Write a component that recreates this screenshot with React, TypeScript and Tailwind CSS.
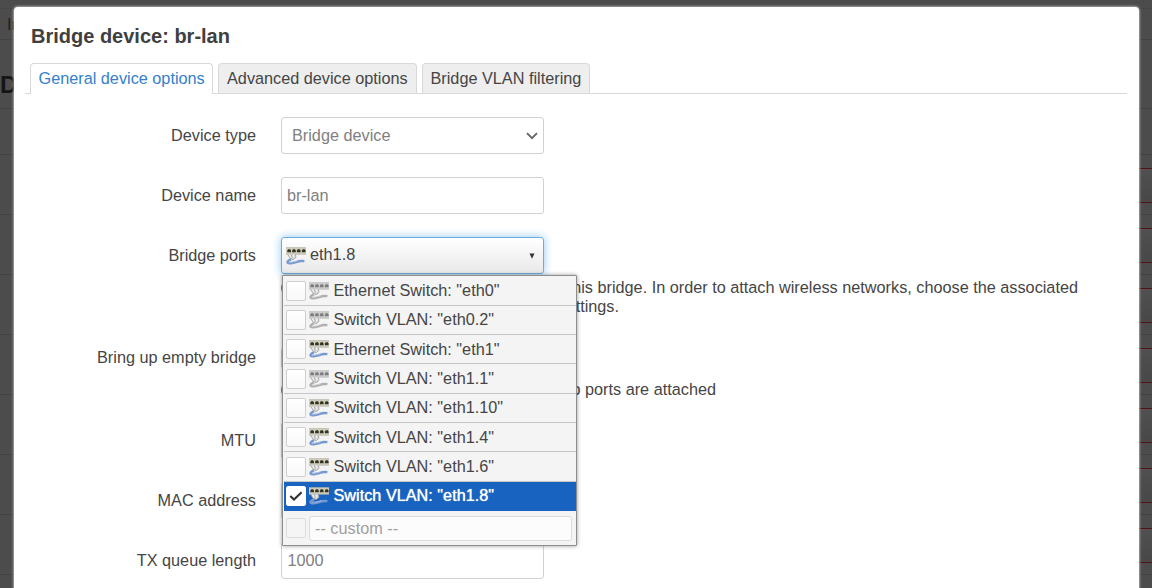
import React from "react";

type PortIconProps = { disabled?: boolean; className?: string };

function PortIcon({ disabled = false, className = "" }: PortIconProps) {
  const panel = disabled ? "#cdcdcd" : "#d0cfc0";
  const edge = disabled ? "#b8b8b8" : "#adac9e";
  const hole = disabled ? "#7d7d7d" : "#35351f";
  const cable = disabled ? "#b0b0b0" : "#7799d0";
  const cableLight = disabled ? "#d3d3d3" : "#a9c2e6";
  return (
    <svg viewBox="0 0 20 20" className={`h-5 w-5 shrink-0 ${className}`} aria-hidden="true">
      <path d="M0 1.4H20V8.4H0Z" fill={panel} />
      <path d="M0 1.7H20M0 8.2H20" stroke={edge} strokeWidth="0.6" />
      <path
        d="M1.3 6.2V4.4l.9-1.2h1.9l.9 1.2v1.8zM6.1 6.2V4.4l.9-1.2h1.9l.9 1.2v1.8zM10.9 6.2V4.4l.9-1.2h1.9l.9 1.2v1.8zM15.9 6.2V4.4l.9-1.2h1.9l.9 1.2v1.8z"
        fill={hole}
      />
      <path d="M1.6 8.2L4.2 12.4L7.2 13.6L9.8 11.6L9.4 8.2Z" fill="#d8d8d4" />
      <path
        d="M1.8 8.6L4.4 12.6L7.2 13.6L9.9 11.4L9.5 8.6M5.4 8.6L6.2 11.6"
        fill="none"
        stroke="#a2a2a2"
        strokeWidth="0.9"
      />
      <path d="M3.6 8.8L5 11.2M7.4 8.8L8 11.4" fill="none" stroke="#f8f8f8" strokeWidth="1.1" />
      <path
        d="M5 13.2C3.5 14 1 15.2 1.5 16.6C2.2 17.8 6.5 17.6 10.2 16.2C12.8 15 15.5 14.8 18.4 15.2"
        fill="none"
        stroke={cable}
        strokeWidth="2.3"
      />
      <path d="M3 16C6.4 16.6 9.6 15.4 12.4 14.4" fill="none" stroke={cableLight} strokeWidth="0.9" />
    </svg>
  );
}

const ports = [
  { label: 'Ethernet Switch: "eth0"', disabled: true },
  { label: 'Switch VLAN: "eth0.2"', disabled: true },
  { label: 'Ethernet Switch: "eth1"' },
  { label: 'Switch VLAN: "eth1.1"', disabled: true },
  { label: 'Switch VLAN: "eth1.10"' },
  { label: 'Switch VLAN: "eth1.4"' },
  { label: 'Switch VLAN: "eth1.6"' },
  { label: 'Switch VLAN: "eth1.8"', selected: true },
];

function Check({ checked = false, faded = false }: { checked?: boolean; faded?: boolean }) {
  return (
    <span
      className={`flex h-5 w-5 shrink-0 items-center justify-center rounded-[2px] border ${
        checked
          ? "border-white bg-white"
          : faded
            ? "border-[#dddddd] bg-[#f5f5f5]"
            : "border-[#cfcfcf] bg-linear-to-b from-white to-[#f8f8f8]"
      }`}
    >
      {checked && (
        <svg viewBox="0 0 14 12" className="h-3 w-3.5">
          <path d="M1.3 6.1L5 9.6L12.6 2.2" fill="none" stroke="#333333" strokeWidth="2.1" />
        </svg>
      )}
    </span>
  );
}

function PortMenu() {
  return (
    <div className="absolute top-[38px] left-px z-10 h-[271px] w-[295px] rounded-[1px] border border-[#8d8d8d] bg-[#f4f4f4] pl-px shadow-[0_0_4px_rgba(0,0,0,0.4)]">
      <ul className="pt-[0.4px]">
        {ports.map((port) => (
          <li
            key={port.label}
            className={`flex h-[29.35px] items-center border-b pl-[2px] ${
              port.selected
                ? "border-[#1763bf] bg-[#1763bf] text-white [text-shadow:0_0_1px_#ffffff]"
                : "border-[#c6c6c6]"
            }`}
          >
            <Check checked={port.selected} />
            <PortIcon disabled={port.disabled} className="ml-[3px]" />
            <span className="-mt-px ml-[4.5px] leading-[22px] whitespace-nowrap">{port.label}</span>
          </li>
        ))}
        <li className="flex h-[34px] items-center pl-[2px]">
          <Check faded />
          <span className="ml-[3px] flex h-[25px] w-[263px] items-center rounded-[3px] border border-[#dcdcdc] bg-[#fcfcfc] pl-[5px] text-[#a0a0a0]">
            -- custom --
          </span>
        </li>
      </ul>
    </div>
  );
}

function Row({ label, className, children }: { label: string; className: string; children?: React.ReactNode }) {
  return (
    <div className={`flex ${className}`}>
      <div className="w-[242px] shrink-0 pt-2 text-right leading-5">{label}</div>
      <div className="ml-[25px] min-w-0 flex-1">{children}</div>
    </div>
  );
}

function Help({ className, children }: { className: string; children: React.ReactNode }) {
  return (
    <div className={`flex justify-between leading-[19px] ${className}`}>
      <span className="mt-[2px] h-4 w-4 shrink-0 rounded-full bg-[#3b88ca]" />
      <div className="whitespace-nowrap">{children}</div>
    </div>
  );
}

const field = "flex h-[37px] w-[263px] items-center rounded-[3px] border border-[#d2d2d2] bg-white text-[#808080]";
const tab = "rounded-t-[4px] border border-[#d9d9d9] border-b-0 px-2 leading-[29px] whitespace-nowrap";
const stripes = [154, 214, 274, 334, 394, 454, 514, 574];

function Backdrop() {
  return (
    <div className="absolute inset-0 overflow-hidden bg-[#4c4c4c]" aria-hidden="true">
      <div className="h-[9px] border-b border-[#464646]" />
      <div className="h-[31px] border-b border-[#434343] pl-[7px] text-[16px] leading-[32px] text-[#202020]">In</div>
      <div className="h-[69px] border-b border-[#414141] pt-[28px] text-[24px] leading-[34px] font-bold text-[#151515]">
        D
      </div>
      <div className="h-[45px]" />
      {stripes.map((stripe) => (
        <div key={stripe} className="h-[60px] border-t border-[#424242]">
          <div className="mt-[13px] ml-auto h-[35px] w-20 border-y border-[#531417] bg-linear-to-b from-[#515050] to-[#494848]" />
        </div>
      ))}
    </div>
  );
}

export default function App() {
  return (
    <main className="relative h-[588px] w-[1152px] overflow-hidden font-['Liberation_Sans',Arial,sans-serif] text-[16.25px] text-[#454545]">
      <Backdrop />
      <section className="relative mt-[7px] ml-[14px] h-[600px] w-[1125px] rounded-[4px] bg-white pt-[15px] shadow-[0_0_3px_#ffffff]">
        <h1 className="h-[41px] pl-[17px] text-[20px] leading-[28px] font-bold text-[#404040]">Bridge device: br-lan</h1>
        <nav className="mr-3 ml-[11px] flex h-[31px] items-start gap-[5px] border-b border-[#d9d9d9] pl-[5px]">
          <div className={`${tab} h-[31px] w-[183px] bg-white pl-[7.5px] text-[#3580cc]`}>General device options</div>
          <div className={`${tab} h-[30px] w-[199px] bg-[#eeeeee]`}>Advanced device options</div>
          <div className={`${tab} h-[30px] w-[168px] bg-[#eeeeee] pl-[7.5px]`}>Bridge VLAN filtering</div>
        </nav>
        <div className="pt-[23px]">
          <Row label="Device type" className="h-[60px]">
            <div className={`${field} justify-between pr-[5px] pl-[10px]`}>
              <span>Bridge device</span>
              <svg viewBox="0 0 12 8" className="h-2 w-3">
                <path d="M1 1.2L6 6.2L11 1.2" fill="none" stroke="#666666" strokeWidth="1.9" />
              </svg>
            </div>
          </Row>
          <Row label="Device name" className="h-[60px]">
            <div className={`${field} pl-[5px]`}>br-lan</div>
          </Row>
          <Row label="Bridge ports" className="h-[102px]">
            <div className="relative">
              <div className="flex h-[37px] w-[263px] items-center rounded-[3px] border border-[#70abdc] bg-linear-to-b from-white to-[#e9e9e9] pr-[7px] pl-[4px] shadow-[0_0_8px_rgba(82,168,236,0.65)]">
                <PortIcon />
                <span className="mb-[2px] ml-[4px] flex-1">eth1.8</span>
                <svg viewBox="0 0 8 6" className="h-1.5 w-2">
                  <path d="M1.5 0.5H6.5L4 5.7Z" fill="#333333" />
                </svg>
              </div>
              <PortMenu />
            </div>
            <div className="mt-1">
              <Help className="w-[797px]">
                this bridge. In order to attach wireless networks, choose the associated
              </Help>
              <div className="w-[338px] text-right leading-[19px]">settings.</div>
            </div>
          </Row>
          <Row label="Bring up empty bridge" className="h-[83px]">
            <div className="mt-[9px] mb-[12px] h-5 w-5 rounded-[2px] border border-[#cccccc]" />
            <Help className="w-[435px]">no ports are attached</Help>
          </Row>
          <Row label="MTU" className="h-[60px]">
            <div className={field} />
          </Row>
          <Row label="MAC address" className="h-[60px]">
            <div className={field} />
          </Row>
          <Row label="TX queue length" className="h-[60px]">
            <div className={`${field} pl-[5.5px]`}>1000</div>
          </Row>
        </div>
      </section>
    </main>
  );
}
